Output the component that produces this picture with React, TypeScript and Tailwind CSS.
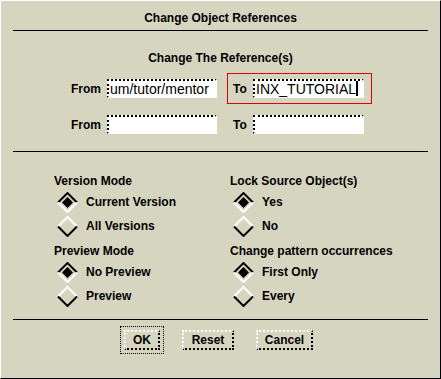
import React from "react";

const Diamond = ({ on }: { on: boolean }) => (
  <svg width="21" height="21" viewBox="0 0 21 21" className="shrink-0">
    {/* upper edges */}
    <path d="M1 10.5 L10.5 1 L20 10.5" fill="none" stroke={on ? "#000" : "#fff"} strokeWidth="2" />
    {/* lower edges */}
    <path d="M1 10.5 L10.5 20 L20 10.5" fill="none" stroke={on ? "#fff" : "#000"} strokeWidth="2" />
    {on && <path d="M5 10.5 L10.5 5 L16 10.5 L10.5 16 Z" fill="#000" />}
  </svg>
);

const Radio = ({ on, label }: { on: boolean; label: string }) => (
  <div className="flex items-center gap-[8px] h-[24px] pl-[3px]">
    <Diamond on={on} />
    <span>{label}</span>
  </div>
);

const Field = ({ value, w, cursor }: { value: string; w: string; cursor?: boolean }) => (
  <div
    className={`${w} h-[19px] bg-white border-[2px] border-dotted border-t-black border-l-black border-r-white border-b-white flex items-center font-normal text-[14px] leading-[16px] pl-[1px]`}
  >
    <span className="whitespace-nowrap">{value}</span>
    {cursor && <span className="w-[2px] h-[15px] bg-black" />}
  </div>
);

const Btn = ({ label, w }: { label: string; w: string }) => (
  <div
    className={`${w} h-[20px] border-[2px] border-dotted border-t-white border-l-white border-r-black border-b-black flex items-center justify-center`}
  >
    {label}
  </div>
);

export default function App() {
  return (
    <div className="w-[441px] h-[379px] bg-[#d6d6c0] border-t border-l border-t-white border-l-white border-r border-b border-r-black border-b-black font-['Liberation_Sans',Arial,sans-serif] font-bold text-[12px] text-black leading-[14px]">
      <div className="h-[29px] pt-[10px] text-center">Change Object References</div>
      <div className="mx-[12px] h-px bg-black" />

      <div className="text-center mt-[20px]">Change The Reference(s)</div>

      <div className="mt-[8px] flex flex-col gap-[5px]">
        <div className="flex items-center h-[31px]">
          <div className="w-[106px] text-right pr-[6px]">From</div>
          <Field value="um/tutor/mentor" w="w-[110px]" />
          <div className="ml-[10px] h-[31px] w-[145px] bg-[#e00000] p-px">
            <div className="h-full bg-[#d6d6c0] flex items-center pl-[5px]">
              <span className="w-[20px]">To</span>
              <Field value="INX_TUTORIAL" w="w-[111px]" cursor />
            </div>
          </div>
        </div>
        <div className="flex items-center h-[31px]">
          <div className="w-[106px] text-right pr-[6px]">From</div>
          <Field value="" w="w-[110px]" />
          <div className="ml-[10px] h-[31px] w-[145px] flex items-center pl-[6px]">
            <span className="w-[20px]">To</span>
            <Field value="" w="w-[111px]" />
          </div>
        </div>
      </div>

      <div className="mx-[12px] mt-[11px] h-px bg-black" />

      <div className="flex mt-[22px]">
        <div className="w-[229px] pl-[53px]">
          <div>Version Mode</div>
          <div className="mt-[2px]">
            <Radio on label="Current Version" />
            <Radio on={false} label="All Versions" />
          </div>
          <div className="mt-[6px]">Preview Mode</div>
          <div className="mt-[2px]">
            <Radio on label="No Preview" />
            <Radio on={false} label="Preview" />
          </div>
        </div>
        <div>
          <div>Lock Source Object(s)</div>
          <div className="mt-[2px]">
            <Radio on label="Yes" />
            <Radio on={false} label="No" />
          </div>
          <div className="mt-[6px]">Change pattern occurrences</div>
          <div className="mt-[2px]">
            <Radio on label="First Only" />
            <Radio on={false} label="Every" />
          </div>
        </div>
      </div>

      <div className="mx-[12px] mt-[11px] h-px bg-black" />

      <div className="flex items-center mt-[6px] pl-[119px]">
        <div className="border border-dotted border-black p-[3px]">
          <Btn label="OK" w="w-[36px]" />
        </div>
        <div className="ml-[18px]">
          <Btn label="Reset" w="w-[52px]" />
        </div>
        <div className="ml-[22px]">
          <Btn label="Cancel" w="w-[57px]" />
        </div>
      </div>
    </div>
  );
}
